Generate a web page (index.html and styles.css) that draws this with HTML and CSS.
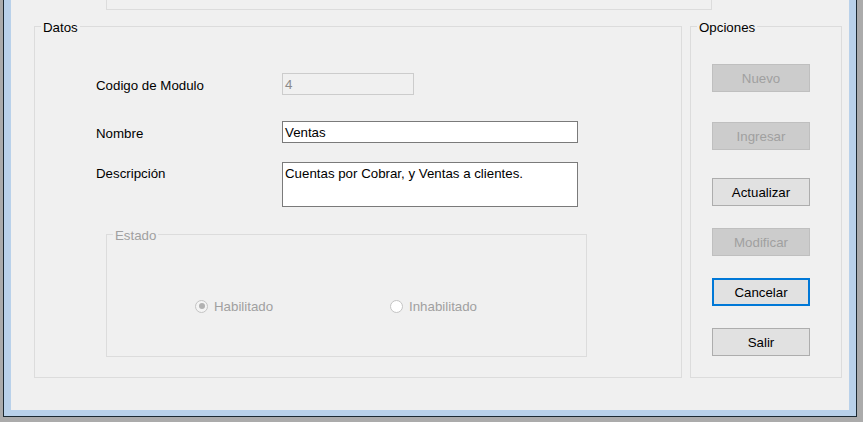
FILE: index.html
```html
<!DOCTYPE html>
<html lang="es">
<head>
<meta charset="utf-8">
<title>Modulos</title>
<link rel="stylesheet" href="styles.css">
</head>
<body>
<div class="window">
  <div class="frame">
    <div class="client">
      <div class="top-group"></div>
      <div class="main-row">
        <div class="group datos">
          <span class="group-title">Datos</span>
          <div class="field-row">
            <div class="field-label">Codigo de Modulo</div>
            <div class="textbox textbox-code is-disabled">4</div>
          </div>
          <div class="field-row row-nombre">
            <div class="field-label">Nombre</div>
            <div class="textbox textbox-wide">Ventas</div>
          </div>
          <div class="field-row row-desc">
            <div class="field-label label-desc">Descripción</div>
            <div class="textbox textbox-wide textbox-multi">Cuentas por Cobrar, y Ventas a clientes.</div>
          </div>
          <div class="group estado is-disabled">
            <span class="group-title">Estado</span>
            <div class="radio-row">
              <div class="radio-item radio-first">
                <span class="radio radio-checked"></span>
                <span class="radio-text">Habilitado</span>
              </div>
              <div class="radio-item">
                <span class="radio"></span>
                <span class="radio-text">Inhabilitado</span>
              </div>
            </div>
          </div>
        </div>
        <div class="group opciones">
          <span class="group-title">Opciones</span>
          <button class="btn btn-first" disabled>Nuevo</button>
          <button class="btn btn-gap30" disabled>Ingresar</button>
          <button class="btn btn-gap28">Actualizar</button>
          <button class="btn" disabled>Modificar</button>
          <button class="btn btn-focus">Cancelar</button>
          <button class="btn">Salir</button>
        </div>
      </div>
    </div>
  </div>
</div>
</body>
</html>
```
FILE: styles.css
```css
html, body {
  margin: 0;
  padding: 0;
}
body {
  width: 863px;
  height: 422px;
  overflow: hidden;
  background: #ababab;
  font-family: "Liberation Sans", Arial, sans-serif;
  font-size: 13.3px;
  line-height: 15px;
  color: #000;
}
.window {
  margin-left: 3px;
  width: 854px;
  height: 417px;
  box-sizing: border-box;
  border: 1px solid #1c2a33;
  border-top: none;
}
.frame {
  height: 416px;
  box-sizing: border-box;
  border-left: 7px solid #b9d1ea;
  border-right: 7px solid #b9d1ea;
  border-bottom: 6px solid #b9d1ea;
}
.client {
  height: 410px;
  background: #f0f0f0;
  overflow: hidden;
}
.top-group {
  margin-left: 95px;
  width: 606px;
  height: 10px;
  box-sizing: border-box;
  border: 1px solid #dcdcdc;
  border-top: none;
}
.main-row {
  display: flex;
  gap: 8px;
  margin-top: 16px;
  padding-left: 23px;
}
.group {
  position: relative;
  box-sizing: border-box;
  border: 1px solid #dcdcdc;
}
.group-title {
  position: absolute;
  top: -7px;
  left: 6px;
  padding: 0 2px;
  background: #f0f0f0;
  white-space: nowrap;
}
.datos {
  width: 648px;
  height: 352px;
  padding-top: 46px;
  padding-left: 61px;
}
.field-row {
  display: flex;
  align-items: flex-start;
}
.row-nombre {
  margin-top: 26px;
}
.row-desc {
  margin-top: 19px;
}
.field-label {
  width: 186px;
  padding-top: 5px;
  white-space: nowrap;
}
.field-label.label-desc {
  padding-top: 4px;
}
.textbox {
  box-sizing: border-box;
  height: 22px;
  padding: 3px 2px 0 2px;
  border: 1px solid #7a7a7a;
  background: #fff;
  white-space: nowrap;
  overflow: hidden;
}
.textbox-code {
  width: 132px;
}
.textbox-code.is-disabled {
  border-color: #cccccc;
  background: #f0f0f0;
  color: #8a8a8a;
}
.textbox-wide {
  width: 296px;
}
.textbox-multi {
  height: 45px;
}
.estado {
  width: 481px;
  height: 123px;
  margin-top: 27px;
  margin-left: 10px;
  color: #a0a0a0;
}
.radio-row {
  display: flex;
  align-items: center;
  padding-top: 64px;
  padding-left: 88px;
}
.radio-item {
  display: flex;
  align-items: center;
  gap: 6px;
}
.radio-first {
  width: 195px;
}
.radio {
  position: relative;
  width: 13px;
  height: 13px;
  box-sizing: border-box;
  border: 1px solid #c4c4c4;
  border-radius: 50%;
  background: #ffffff;
  margin-top: -1px;
}
.radio-checked {
  background: #f4f4f4;
}
.radio-checked::after {
  content: "";
  position: absolute;
  left: 2.5px;
  top: 2.5px;
  width: 6px;
  height: 6px;
  border-radius: 50%;
  background: #b2b2b2;
}
.radio-text {
  line-height: 15px;
}
.opciones {
  width: 152px;
  height: 352px;
  display: flex;
  flex-direction: column;
  align-items: flex-start;
  padding-left: 21px;
}
.btn {
  width: 98px;
  height: 28px;
  box-sizing: border-box;
  margin-top: 22px;
  padding: 0;
  font-family: inherit;
  font-size: 13.3px;
  line-height: 15px;
  color: #000;
  background: #e1e1e1;
  border: 1px solid #adadad;
  border-radius: 0;
}
.btn:disabled {
  background: #cccccc;
  border-color: #bfbfbf;
  color: #a0a0a0;
}
.btn-first {
  margin-top: 37px;
}
.btn-gap30 {
  margin-top: 30px;
}
.btn-gap28 {
  margin-top: 28px;
}
.btn-focus {
  border: 2px solid #0078d7;
}
```
